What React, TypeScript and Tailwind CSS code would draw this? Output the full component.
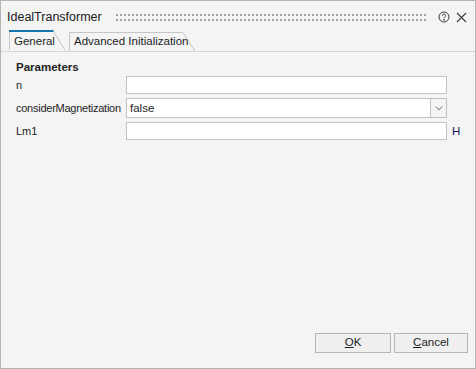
import React from 'react';

// Windows-style property dialog for an IdealTransformer block

const font = { fontFamily: '"Liberation Sans", Arial, sans-serif' };

function TabShape({ active }: { active?: boolean }) {
  // outline of a slanted tab, drawn over the tab box
  return (
    <svg className="absolute inset-0 h-full w-full overflow-visible" preserveAspectRatio="none">
      <polyline
        points={active ? '0.5,20 0.5,1 44,1 56,20' : '0.5,19 0.5,0.5 114,0.5 126,19'}
        fill="none"
        stroke="#c6c6c6"
        strokeWidth="1"
      />
      {active && <line x1="0" y1="1" x2="44.5" y2="1" stroke="#1a74b0" strokeWidth="2" />}
    </svg>
  );
}

function Grip() {
  return (
    <svg className="h-[7px] flex-1" preserveAspectRatio="none">
      <defs>
        <pattern id="grip" width="4" height="5" patternUnits="userSpaceOnUse">
          <rect x="0" y="0" width="2" height="2" fill="#a2a2a2" />
        </pattern>
      </defs>
      <rect width="100%" height="7" fill="url(#grip)" />
    </svg>
  );
}

export default function App() {
  return (
    <div
      className="flex h-[369px] w-[476px] flex-col border border-[#b4b4b4] bg-[#f4f4f4] text-[11.5px] text-[#1e1e1e]"
      style={font}
    >
      {/* title bar */}
      <div className="flex h-[29px] items-center pl-[6px] pr-[8px] pt-[3px]">
        <span className="whitespace-nowrap text-[12.5px] text-[#202020]">IdealTransformer</span>
        <div className="ml-[14px] mr-[10px] flex flex-1">
          <Grip />
        </div>
        <div className="flex items-center gap-[6px]">
          <svg width="12" height="12" viewBox="0 0 12 12" fill="none" stroke="#3a3a3a" strokeWidth="1">
            <circle cx="6" cy="6" r="5" />
            <path d="M4.4 4.7a1.6 1.6 0 1 1 2.3 1.4c-.5.3-.7.6-.7 1.1" />
            <circle cx="6" cy="8.8" r="0.4" fill="#3a3a3a" />
          </svg>
          <svg width="11" height="11" viewBox="0 0 11 11" stroke="#3a3a3a" strokeWidth="1.1">
            <path d="M1 1l9 9M10 1l-9 9" />
          </svg>
        </div>
      </div>

      {/* tabs */}
      <div className="flex h-[22px] items-end border-b border-[#d6d6d6] pl-[8px]">
        <div className="relative flex h-[21px] w-[57px] items-center whitespace-nowrap pl-[5px] pt-[2px]">
          <TabShape active />
          <span className="relative">General</span>
        </div>
        <div className="relative ml-[3px] flex h-[19px] w-[127px] items-center whitespace-nowrap pl-[5px] pt-[1px]">
          <TabShape />
          <span className="relative">Advanced Initialization</span>
        </div>
      </div>

      {/* parameters */}
      <div className="grid grid-cols-[110px_321px_auto] items-center gap-y-[4px] whitespace-nowrap pl-[15px] pt-[8px] text-[11px] leading-[14px]">
        <div className="col-span-3 -mb-[2px] text-[11.5px] font-bold">Parameters</div>
        <div>n</div>
        <div className="h-[18px] border border-[#c2c2c2] bg-white" />
        <div />
        <div className="tracking-[-0.25px]">considerMagnetization</div>
        <div className="flex h-[20px]">
          <div className="flex flex-1 items-center border border-[#c2c2c2] bg-white pl-[3px] text-[11.5px]">false</div>
          <div className="flex w-[16px] items-center justify-center border border-l-0 border-[#c2c2c2] bg-[#f4f4f4]">
            <svg width="8" height="5" viewBox="0 0 8 5" fill="#8c8c8c">
              <path d="M0 0.5l4 4 4-4-1.3 0L4 3 1.3 0.5z" />
            </svg>
          </div>
        </div>
        <div />
        <div>Lm1</div>
        <div className="h-[18px] border border-[#c2c2c2] bg-white" />
        <div className="pl-[5px] text-[11.5px] text-[#1a1a5a]">H</div>
      </div>

      <div className="flex-1" />

      {/* buttons */}
      <div className="flex justify-end gap-[3px] pb-[15px] pr-[7px]">
        <button className="h-[20px] w-[76px] border border-[#b5b5b5] bg-[#efefef]">
          <span className="underline">O</span>K
        </button>
        <button className="h-[20px] w-[74px] border border-[#b5b5b5] bg-[#efefef]">
          <span className="underline">C</span>ancel
        </button>
      </div>
    </div>
  );
}
